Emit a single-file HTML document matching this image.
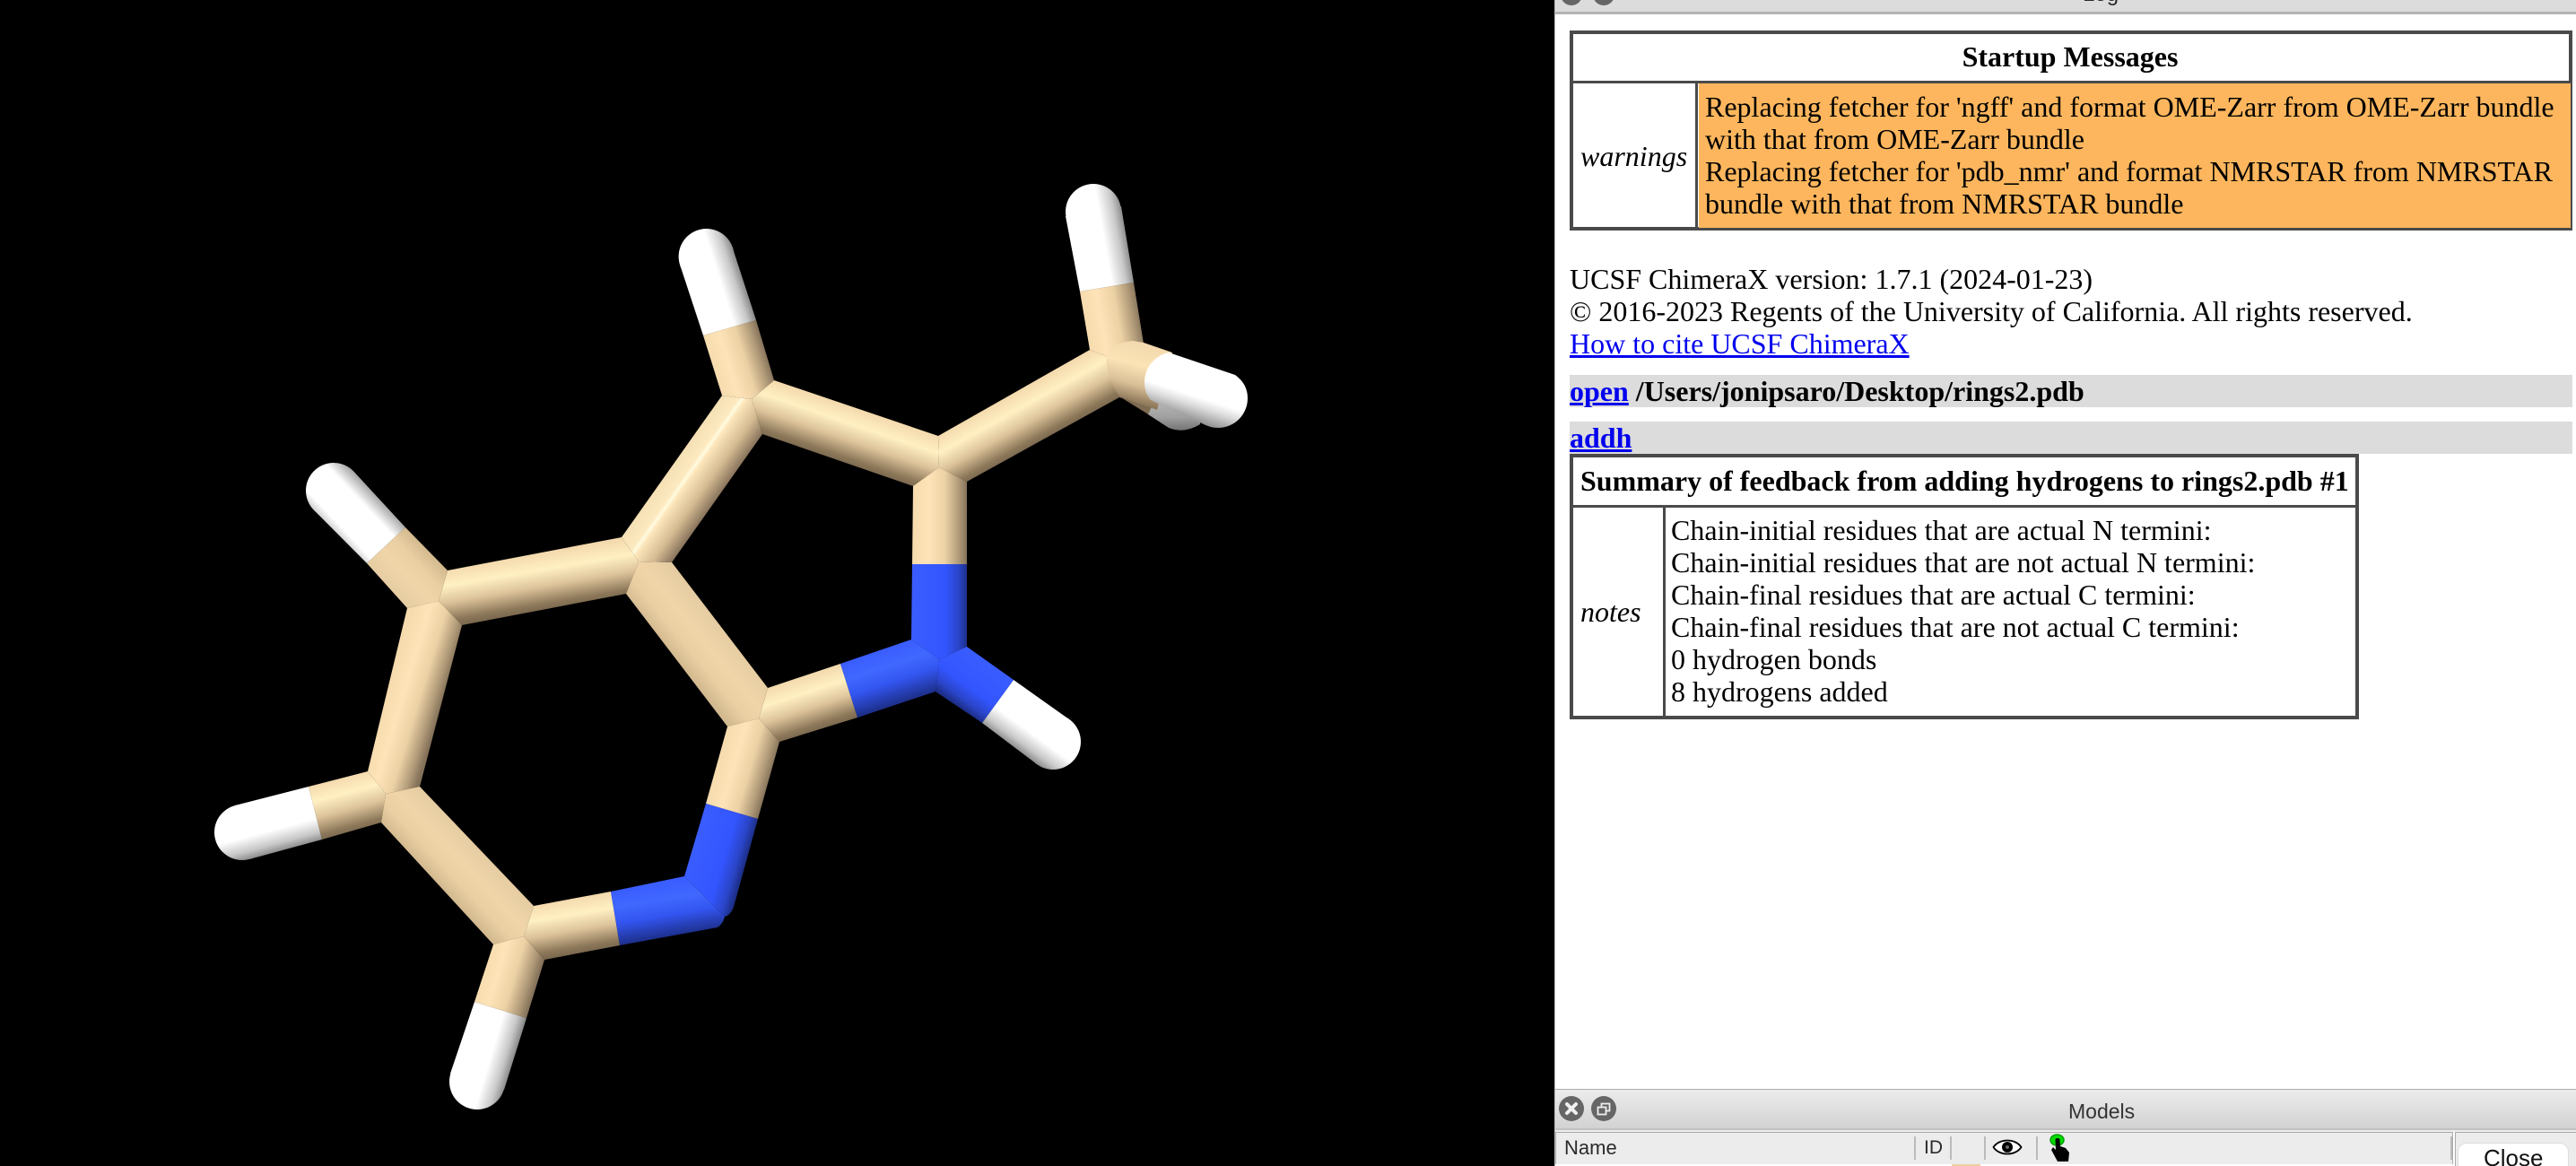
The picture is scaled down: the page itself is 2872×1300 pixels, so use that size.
<!DOCTYPE html>
<html>
<head>
<meta charset="utf-8">
<title>ChimeraX</title>
<style>
html,body{margin:0;padding:0;background:#000;width:2872px;height:1300px;overflow:hidden;}
#root{position:relative;width:2872px;height:1300px;overflow:hidden;background:#000;}
#panel{position:absolute;left:1733px;top:0;width:1139px;height:1300px;background:#fff;border-left:1px solid #bbb;box-sizing:border-box;}
.a{position:absolute;box-sizing:border-box;}
.l{position:absolute;white-space:nowrap;font-family:"Liberation Serif",serif;font-size:32px;line-height:36px;height:36px;color:#000;}
.s{position:absolute;white-space:nowrap;font-family:"Liberation Sans",sans-serif;color:#2a2a2a;}
.b{font-weight:bold;}
.i{font-style:italic;}
a{color:#0000ee;text-decoration:underline;}
.bd{background:#4a4a4a;position:absolute;}
</style>
</head>
<body>
<div id="root">
<svg style="position:absolute;left:0;top:0" width="1733" height="1300" viewBox="0 0 1733 1300">
<defs>
<linearGradient id="t"><stop offset="0" stop-color="#f3d9ad"/><stop offset=".3" stop-color="#fff0c2"/><stop offset=".6" stop-color="#dcc29a"/><stop offset=".9" stop-color="#8c7859"/><stop offset="1" stop-color="#7d6a50"/></linearGradient>
<linearGradient id="f"><stop offset="0" stop-color="#e6cca2"/><stop offset=".4" stop-color="#f0d5a9"/><stop offset=".7" stop-color="#eacfa3"/><stop offset="1" stop-color="#d3b98f"/></linearGradient>
<linearGradient id="v"><stop offset="0" stop-color="#f5dbae"/><stop offset=".3" stop-color="#ffe3b8"/><stop offset=".6" stop-color="#ecd1a5"/><stop offset=".85" stop-color="#b09a78"/><stop offset="1" stop-color="#85725a"/></linearGradient>
<linearGradient id="h"><stop offset="0" stop-color="#f5e0b5"/><stop offset=".27" stop-color="#fde9bf"/><stop offset=".33" stop-color="#fffbe0"/><stop offset=".39" stop-color="#fde6bb"/><stop offset=".7" stop-color="#d5bb92"/><stop offset="1" stop-color="#85715a"/></linearGradient>
<linearGradient id="w"><stop offset="0" stop-color="#fff"/><stop offset=".6" stop-color="#fff"/><stop offset=".85" stop-color="#c8c8c8"/><stop offset="1" stop-color="#8c8c8c"/></linearGradient>
<linearGradient id="wf"><stop offset="0" stop-color="#d0d0d0"/><stop offset=".15" stop-color="#fff"/><stop offset=".72" stop-color="#fff"/><stop offset="1" stop-color="#a5a5a5"/></linearGradient>
<linearGradient id="n"><stop offset="0" stop-color="#3a5dff"/><stop offset=".3" stop-color="#4068ff"/><stop offset=".6" stop-color="#3355f0"/><stop offset="1" stop-color="#1d2f8a"/></linearGradient>
<linearGradient id="nv"><stop offset="0" stop-color="#3a5dff"/><stop offset=".6" stop-color="#3355ff"/><stop offset=".85" stop-color="#2a45c8"/><stop offset="1" stop-color="#1d2f8a"/></linearGradient>

<linearGradient id="g1" href="#t" gradientUnits="userSpaceOnUse" x1="954" y1="454.6" x2="934" y2="513.4"/>
<linearGradient id="g2" href="#t" gradientUnits="userSpaceOnUse" x1="1132" y1="437" x2="1162" y2="491"/>
<linearGradient id="g3t" href="#v" gradientUnits="userSpaceOnUse" x1="1017" y1="0" x2="1078" y2="0"/>
<linearGradient id="g3n" href="#nv" gradientUnits="userSpaceOnUse" x1="1017" y1="0" x2="1078" y2="0"/>
<linearGradient id="g4n" href="#nv" gradientUnits="userSpaceOnUse" x1="1130" y1="758" x2="1095" y2="806"/>
<linearGradient id="g4w" href="#w" gradientUnits="userSpaceOnUse" x1="1192" y1="802" x2="1156" y2="852"/>
<linearGradient id="g5t" href="#t" gradientUnits="userSpaceOnUse" x1="936.4" y1="740.5" x2="955.6" y2="799.5"/>
<linearGradient id="g5n" href="#n" gradientUnits="userSpaceOnUse" x1="936.4" y1="740.5" x2="955.6" y2="799.5"/>
<linearGradient id="g6" href="#f" gradientUnits="userSpaceOnUse" x1="802" y1="697" x2="754.5" y2="736"/>
<linearGradient id="g7" href="#h" gradientUnits="userSpaceOnUse" x1="749" y1="520" x2="800" y2="556"/>
<linearGradient id="g8" href="#t" gradientUnits="userSpaceOnUse" x1="596" y1="617.5" x2="606.5" y2="679.5"/>
<linearGradient id="g9t" href="#v" gradientUnits="userSpaceOnUse" x1="758" y1="295.4" x2="817" y2="276.6"/>
<linearGradient id="g9w" href="#w" gradientUnits="userSpaceOnUse" x1="758" y1="295.4" x2="817" y2="276.6"/>
<linearGradient id="g10t" href="#v" gradientUnits="userSpaceOnUse" x1="1188" y1="241" x2="1250" y2="230"/>
<linearGradient id="g10w" href="#w" gradientUnits="userSpaceOnUse" x1="1188" y1="241" x2="1250" y2="230"/>
<linearGradient id="g11t" href="#f" gradientUnits="userSpaceOnUse" x1="349.5" y1="568.3" x2="394.5" y2="525.7"/>
<linearGradient id="g11w" href="#wf" gradientUnits="userSpaceOnUse" x1="349.5" y1="568.3" x2="394.5" y2="525.7"/>
<linearGradient id="g12" href="#v" gradientUnits="userSpaceOnUse" x1="432" y1="769" x2="491.5" y2="787"/>
<linearGradient id="g13t" href="#t" gradientUnits="userSpaceOnUse" x1="262" y1="898" x2="278" y2="958"/>
<linearGradient id="g13w" href="#w" gradientUnits="userSpaceOnUse" x1="262" y1="898" x2="278" y2="958"/>
<linearGradient id="g14" href="#f" gradientUnits="userSpaceOnUse" x1="531.5" y1="943.5" x2="487.5" y2="985"/>
<linearGradient id="g15t" href="#t" gradientUnits="userSpaceOnUse" x1="681" y1="994" x2="691" y2="1054"/>
<linearGradient id="g15n" href="#n" gradientUnits="userSpaceOnUse" x1="681" y1="994" x2="691" y2="1054"/>
<linearGradient id="g16t" href="#v" gradientUnits="userSpaceOnUse" x1="787" y1="896" x2="845" y2="913"/>
<linearGradient id="g16n" href="#nv" gradientUnits="userSpaceOnUse" x1="787" y1="896" x2="845" y2="913"/>
<linearGradient id="g17t" href="#v" gradientUnits="userSpaceOnUse" x1="502" y1="1197" x2="562" y2="1215"/>
<linearGradient id="g17w" href="#w" gradientUnits="userSpaceOnUse" x1="502" y1="1197" x2="562" y2="1215"/>
<linearGradient id="g18t" gradientUnits="userSpaceOnUse" x1="1282" y1="384" x2="1264" y2="455"><stop offset="0" stop-color="#f3d9ad"/><stop offset=".35" stop-color="#fbe3b6"/><stop offset=".65" stop-color="#d9bf97"/><stop offset=".88" stop-color="#957f5f"/><stop offset="1" stop-color="#7a6850"/></linearGradient>
<linearGradient id="g18w" gradientUnits="userSpaceOnUse" x1="1345" y1="400" x2="1322" y2="471"><stop offset="0" stop-color="#fff"/><stop offset=".58" stop-color="#fff"/><stop offset=".72" stop-color="#dcdcdc"/><stop offset=".9" stop-color="#a0a0a0"/><stop offset="1" stop-color="#808080"/></linearGradient>
<linearGradient id="g19w" gradientUnits="userSpaceOnUse" x1="0" y1="440" x2="0" y2="482"><stop offset="0" stop-color="#c0c0c0"/><stop offset=".6" stop-color="#a0a0a0"/><stop offset="1" stop-color="#6e6e6e"/></linearGradient>
</defs>
<rect width="1733" height="1300" fill="#000"/>

<!-- rear CH3 H -->
<path d="M1248,442 L1285,465 L1300,440 L1260,420 Z" fill="#7d6a50"/>
<path d="M1280,462 L1303,477 Q1320,484 1338,473 L1340,440 L1295,430 Z" fill="url(#g19w)"/>

<!-- C4-C1 -->
<polygon points="863,424 1046,486 1047,521 1018,542 850,484 838,445" fill="url(#g1)"/>
<!-- C1-C5 -->
<polygon points="1046,486 1215,390 1233,397 1250,405 1250,444 1248,443 1078,537 1047,521" fill="url(#g2)"/>
<!-- C1-N1 -->
<polygon points="1047,521 1078,537 1078,629.500 1017,629.500 1018,542" fill="url(#g3t)"/>
<polygon points="1017,629 1078,629 1078,721 1047,735 1016,713" fill="url(#g3n)"/>
<!-- N1-Hn -->
<polygon points="1130,758 1192,802 1156,852 1095,806" fill="url(#g4w)"/>
<circle cx="1174" cy="827" r="31" fill="url(#g4w)"/>
<polygon points="1047,735 1078,721 1130,758 1095,806 1043,771" fill="url(#g4n)"/>
<!-- C2-N1 -->
<polygon points="846,801 856,767 937,740 956,800 869,827" fill="url(#g5t)"/>
<polygon points="937,740 1016,713 1047,735 1043,771 956,800" fill="url(#g5n)"/>
<!-- C3-C2 -->
<polygon points="712,626 749,627 856,767 846,801 811,810 698,662" fill="url(#g6)"/>
<!-- C6-C3 -->
<polygon points="489,670 499,636 693,599 712,626 698,662 515,697" fill="url(#g8)"/>
<!-- C3-C4 -->
<polygon points="712,626 693,599 805,441 838,445 850,484 749,627" fill="url(#g7)"/>
<!-- C4-H4 -->
<polygon points="784,374 843,357 817,277 758,295" fill="url(#g9w)"/>
<circle cx="787.600" cy="286" r="31" fill="url(#g9w)"/>
<polygon points="838,445 805,441 784,374 843,357 863,424" fill="url(#g9t)"/>
<!-- C5-H5a -->
<polygon points="1204,325 1264,315 1250,230 1188,241" fill="url(#g10w)"/>
<circle cx="1219" cy="236" r="31" fill="url(#g10w)"/>
<polygon points="1233,397 1215,390 1204,325 1264,315 1275,383 1270,395 1245,400" fill="url(#g10t)"/>
<!-- C6-H6 -->
<polygon points="452,588 409,628 349.500,568.300 394.500,525.700" fill="url(#g11w)"/>
<circle cx="372" cy="547" r="31" fill="url(#g11w)"/>
<polygon points="489,670 499,636 452,588 409,628 454,678" fill="url(#g11t)"/>
<!-- C7-C6 -->
<polygon points="430,885 410,860 454,678 489,670 515,697 468,877" fill="url(#g12)"/>
<!-- C7-H7 -->
<polygon points="344,877 359,936 278,958 262,898" fill="url(#g13w)"/>
<circle cx="270" cy="928" r="31" fill="url(#g13w)"/>
<polygon points="430,885 410,860 344,877 359,936 425,917" fill="url(#g13t)"/>
<!-- C7-C8 -->
<polygon points="430,885 468,877 595,1010 584,1044 550,1053 425,917" fill="url(#g14)"/>
<!-- C8-H8 -->
<polygon points="529,1117 587,1135 562,1215 502,1197" fill="url(#g17w)"/>
<circle cx="532" cy="1206" r="31" fill="url(#g17w)"/>
<polygon points="584,1044 550,1053 529,1117 587,1135 607,1070" fill="url(#g17t)"/>
<!-- C8-N2 -->
<polygon points="584,1044 595,1010 681,994 691,1054 607,1070" fill="url(#g15t)"/>
<path d="M681,994 L763,977 L808,1022 Q806,1030 800,1034 L691,1054 Z" fill="url(#g15n)"/>
<!-- N2-C2 -->
<polygon points="846,801 811,810 787,896 845,913 869,827" fill="url(#g16t)"/>
<path d="M787,896 L845,913 L818,1011 Q815,1020 808,1022 L763,977 Z" fill="url(#g16n)"/>
<!-- front CH3 stick and H -->
<path d="M1233,397 Q1240,382 1263,380 L1275,382 L1307,393 L1290,457 L1248,442 Q1235,425 1233,397 Z" fill="url(#g18t)"/>
<path d="M1303,393 L1377,418 Q1391,428 1391,444 A33,33 0 0 1 1358,477 Q1349,477 1340,472 L1283,446 Q1276,438 1276,426 A34,34 0 0 1 1303,393 Z" fill="url(#g18w)"/>
</svg>

<div id="panel"></div>

<!-- Log title bar -->
<div class="a" style="left:1734px;top:0;width:1138px;height:13px;background:#dcdcdc;"></div>
<div class="a" style="left:1734px;top:13px;width:1138px;height:3px;background:#b4b4b4;"></div>
<div class="a" style="left:1740px;top:-18px;width:24px;height:24px;border-radius:50%;background:#666;"></div>
<div class="a" style="left:1776px;top:-18px;width:24px;height:24px;border-radius:50%;background:#666;"></div>
<div style="position:absolute;left:1734px;top:0;width:1138px;height:7px;overflow:hidden;">
<div class="s" style="left:588px;top:-21px;font-size:24px;line-height:30px;">Log</div>
</div>

<!-- Startup table -->
<div class="a" style="left:1750px;top:34px;width:1118px;height:223px;border:4px solid #4a4a4a;"></div>
<div class="a" style="left:1894px;top:93px;width:972px;height:161px;background:#fdb65d;"></div>
<div class="bd" style="left:1752px;top:90px;width:1114px;height:3px;"></div>
<div class="bd" style="left:1890px;top:92px;width:3px;height:162px;"></div>
<div class="l b" style="left:2058px;width:500px;text-align:center;top:45px;">Startup Messages</div>
<div class="l i" style="left:1762px;top:156px;">warnings</div>
<div class="l" style="left:1901px;top:101px;">Replacing fetcher for 'ngff' and format OME-Zarr from OME-Zarr bundle</div>
<div class="l" style="left:1901px;top:137px;">with that from OME-Zarr bundle</div>
<div class="l" style="left:1901px;top:173px;">Replacing fetcher for 'pdb_nmr' and format NMRSTAR from NMRSTAR</div>
<div class="l" style="left:1901px;top:209px;">bundle with that from NMRSTAR bundle</div>

<!-- Version -->
<div class="l" style="left:1750px;top:293px;">UCSF ChimeraX version: 1.7.1 (2024-01-23)</div>
<div class="l" style="left:1750px;top:329px;">© 2016-2023 Regents of the University of California. All rights reserved.</div>
<div class="l" style="left:1750px;top:365px;"><a href="#">How to cite UCSF ChimeraX</a></div>

<!-- Commands -->
<div class="a" style="left:1750px;top:418px;width:1118px;height:36px;background:#dcdcdc;"></div>
<div class="l b" style="left:1750px;top:418px;"><a href="#">open</a> /Users/jonipsaro/Desktop/rings2.pdb</div>
<div class="a" style="left:1750px;top:470px;width:1118px;height:36px;background:#dcdcdc;"></div>
<div class="l b" style="left:1750px;top:470px;"><a href="#">addh</a></div>

<!-- Summary table -->
<div class="a" style="left:1750px;top:506px;width:880px;height:296px;border:4px solid #4a4a4a;"></div>
<div class="bd" style="left:1752px;top:563px;width:876px;height:3px;"></div>
<div class="bd" style="left:1854px;top:565px;width:3px;height:234px;"></div>
<div class="l b" style="left:1762px;top:518px;">Summary of feedback from adding hydrogens to rings2.pdb #1</div>
<div class="l i" style="left:1762px;top:664px;">notes</div>
<div class="l" style="left:1863px;top:573px;">Chain-initial residues that are actual N termini:</div>
<div class="l" style="left:1863px;top:609px;">Chain-initial residues that are not actual N termini:</div>
<div class="l" style="left:1863px;top:645px;">Chain-final residues that are actual C termini:</div>
<div class="l" style="left:1863px;top:681px;">Chain-final residues that are not actual C termini:</div>
<div class="l" style="left:1863px;top:717px;">0 hydrogen bonds</div>
<div class="l" style="left:1863px;top:753px;">8 hydrogens added</div>

<!-- Models bar -->
<div class="a" style="left:1734px;top:1214px;width:1138px;height:1px;background:#aaa;"></div>
<div class="a" style="left:1734px;top:1215px;width:1138px;height:43px;background:linear-gradient(#ececec,#d2d2d2);"></div>
<div class="a" style="left:1734px;top:1258px;width:1138px;height:2px;background:#c2c2c2;"></div>
<div class="a" style="left:1734px;top:1260px;width:1138px;height:2px;background:#ececec;"></div>
<svg style="position:absolute;left:1738px;top:1222px" width="64" height="28" viewBox="0 0 64 28">
<circle cx="14" cy="14" r="14" fill="#666"/>
<path d="M9 9 L19 19 M19 9 L9 19" stroke="#f0f0f0" stroke-width="4" stroke-linecap="round"/>
<circle cx="50" cy="14" r="14" fill="#666"/>
<rect x="47.500" y="8.500" width="9" height="8" fill="none" stroke="#eee" stroke-width="1.800"/>
<rect x="43.500" y="12.500" width="9" height="8" fill="#666" stroke="#eee" stroke-width="1.800"/>
</svg>
<div class="s" style="left:2306px;top:1225px;font-size:23px;line-height:28px;color:#333;">Models</div>

<!-- Models table header -->
<div class="a" style="left:1734px;top:1262px;width:1001px;height:36px;background:#ececec;border-top:1px solid #aaa;border-left:1px solid #aaa;border-right:1px solid #aaa;"></div>
<div class="s" style="left:1744px;top:1267px;font-size:22px;line-height:26px;">Name</div>
<div class="a" style="left:2134px;top:1267px;width:2px;height:26px;background:#bbb;"></div>
<div class="s" style="left:2145px;top:1267px;font-size:21px;line-height:26px;">ID</div>
<div class="a" style="left:2174px;top:1267px;width:2px;height:26px;background:#bbb;"></div>
<div class="a" style="left:2212px;top:1267px;width:2px;height:26px;background:#bbb;"></div>
<div class="a" style="left:2270px;top:1267px;width:2px;height:26px;background:#bbb;"></div>
<div class="a" style="left:2732px;top:1267px;width:2px;height:26px;background:#bbb;"></div>
<svg style="position:absolute;left:2221px;top:1269px" width="34" height="20" viewBox="0 0 34 20">
<path d="M1.500 10 C8 0 26 0 32.500 10 C26 20 8 20 1.500 10 Z" fill="#fff" stroke="#000" stroke-width="1.800"/>
<circle cx="17" cy="10" r="6" fill="#000"/>
<circle cx="17" cy="10" r="2" fill="#666"/>
</svg>
<svg style="position:absolute;left:2282px;top:1262px" width="30" height="36" viewBox="0 0 30 36">
<ellipse cx="11.500" cy="9" rx="7.500" ry="6" fill="#00dc00" stroke="#00a000" stroke-width="1.500"/>
<path d="M9.500 8.500 C9.500 6.500 14.500 6.500 14.500 8.500 L15 16 L21 18 L25 23 L24 33 L12 33 L5 20 L7 17 L10 20 Z" fill="#000"/>
</svg>
<!-- Tile row -->
<div class="a" style="left:1734px;top:1298px;width:1001px;height:2px;background:#fff;"></div>
<div class="a" style="left:2176px;top:1298px;width:32px;height:2px;background:#f0d0a0;"></div>

<!-- Right side with Close -->
<div class="a" style="left:2737px;top:1262px;width:135px;height:38px;background:#ececec;border-left:1px solid #aaa;border-top:1px solid #aaa;"></div>
<div class="a" style="left:2740px;top:1274px;width:124px;height:26px;background:#fff;border-radius:10px 10px 0 0;border:1px solid #ddd;border-bottom:0;"></div>
<div class="s" style="left:2769px;top:1276px;font-size:26px;line-height:30px;color:#111;">Close</div>
</div>
</body>
</html>
